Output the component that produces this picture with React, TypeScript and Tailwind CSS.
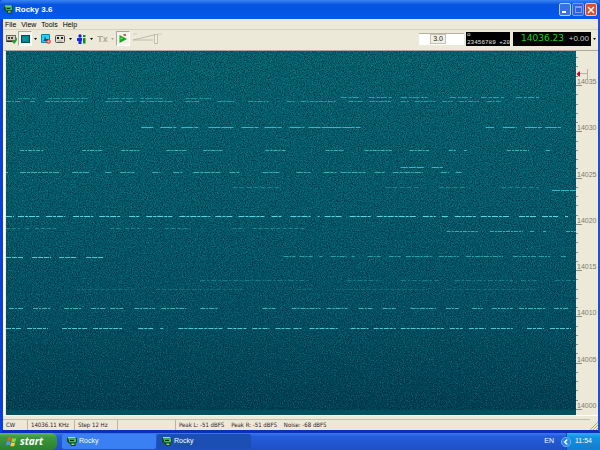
import type { ReactNode } from "react";

type Span = [number, number];

interface Trace {
	y: number;
	color: string;
	opacity: number;
	dash: string;
	spans: Span[];
}

const MENUS = ["File", "View", "Tools", "Help"];
const SCALE_LABELS = [14030, 14025, 14020, 14015, 14010, 14005, 14000];

const TRACES: Trace[] = [
	{
		y: 47,
		color: "#2fb4c4",
		opacity: 0.6,
		dash: "4 1 7 2",
		spans: [[12, 30], [42, 82], [101, 128], [134, 157], [179, 205]],
	},
	{
		y: 46,
		color: "#37b9cf",
		opacity: 0.75,
		dash: "6 2 3 1",
		spans: [[334, 354], [362, 386], [394, 421], [443, 465], [474, 498], [509, 532]],
	},
	{
		y: 50,
		color: "#3fc5c4",
		opacity: 0.65,
		dash: "5 1 2 1",
		spans: [
			[0, 15], [24, 30], [39, 77], [99, 116], [120, 130], [134, 166], [179, 194],
			[211, 229], [242, 262], [280, 288], [294, 329], [342, 356], [363, 384],
			[394, 403], [408, 428], [435, 446], [452, 472], [480, 494],
		],
	},
	{
		y: 76,
		color: "#35c5d0",
		opacity: 0.9,
		dash: "12 1 20 1",
		spans: [
			[135, 147], [154, 170], [175, 192], [202, 227], [235, 252], [258, 275],
			[283, 298], [302, 354], [479, 487], [496, 510], [518, 535], [538, 554],
		],
	},
	{
		y: 99,
		color: "#4fd6cc",
		opacity: 0.75,
		dash: "4 1 2 1",
		spans: [
			[14, 38], [76, 97], [115, 133], [160, 180], [197, 216], [259, 279],
			[319, 337], [358, 385], [403, 422], [442, 449], [457, 460], [500, 522],
			[539, 543],
		],
	},
	{
		y: 121,
		color: "#4fd6cc",
		opacity: 0.7,
		dash: "6 1 3 1",
		spans: [
			[0, 2], [14, 54], [66, 84], [99, 106], [114, 128], [146, 154], [167, 176],
			[187, 214], [223, 234], [256, 273], [290, 304], [317, 330], [334, 359],
			[368, 379], [386, 416], [434, 442], [449, 456],
		],
	},
	{
		y: 116,
		color: "#3cc8da",
		opacity: 0.85,
		dash: "7 1",
		spans: [[394, 418], [425, 436]],
	},
	{
		y: 136,
		color: "#34aaa9",
		opacity: 0.5,
		dash: "5 2",
		spans: [[226, 274], [379, 414], [432, 459], [494, 532]],
	},
	{ y: 139, color: "#3cc8da", opacity: 0.85, dash: "8 1", spans: [[545, 569]] },
	{
		y: 165,
		color: "#68e2ee",
		opacity: 0.9,
		dash: "6 1 3 1",
		spans: [
			[0, 8], [12, 34], [40, 59], [67, 87], [93, 114], [123, 134], [140, 166],
			[173, 204], [209, 226], [232, 258], [265, 276], [284, 304], [311, 313],
			[318, 336], [343, 364], [370, 410], [416, 429], [435, 442], [448, 469],
			[474, 502], [512, 529], [535, 551], [558, 561],
		],
	},
	{
		y: 177,
		color: "#38b0b0",
		opacity: 0.55,
		dash: "4 2",
		spans: [
			[0, 14], [19, 24], [29, 50], [104, 114], [119, 134], [142, 148],
			[159, 184], [226, 239], [246, 300],
		],
	},
	{
		y: 180,
		color: "#45cdd0",
		opacity: 0.75,
		dash: "4 1 2 1",
		spans: [[440, 472], [483, 516], [523, 527], [536, 539], [559, 569]],
	},
	{
		y: 206,
		color: "#5ce0dc",
		opacity: 0.85,
		dash: "5 1",
		spans: [[0, 18], [26, 45], [53, 71], [80, 98]],
	},
	{
		y: 205,
		color: "#45cdc4",
		opacity: 0.65,
		dash: "5 1 2 1",
		spans: [
			[277, 289], [293, 306], [313, 316], [324, 340], [345, 348], [361, 374],
			[382, 394], [399, 426], [432, 452], [459, 496], [506, 529], [532, 543],
			[554, 559],
		],
	},
	{
		y: 229,
		color: "#2fa5a5",
		opacity: 0.5,
		dash: "5 2 2 2",
		spans: [[194, 304], [340, 374], [394, 432], [448, 506], [514, 532], [548, 569]],
	},
	{
		y: 238,
		color: "#2fa5a5",
		opacity: 0.35,
		dash: "4 2",
		spans: [[70, 130], [150, 236], [290, 304], [330, 420], [440, 530]],
	},
	{
		y: 257,
		color: "#55d4d4",
		opacity: 0.75,
		dash: "5 1 2 1",
		spans: [
			[3, 18], [27, 45], [58, 76], [85, 99], [104, 117], [128, 149], [155, 180],
			[194, 212], [256, 269], [285, 314], [320, 341], [352, 367], [376, 389],
			[404, 429], [439, 452], [465, 476], [485, 506], [512, 538], [547, 561],
		],
	},
	{
		y: 277,
		color: "#62dce4",
		opacity: 0.85,
		dash: "5 1 3 1",
		spans: [
			[0, 15], [21, 42], [56, 82], [87, 117], [132, 148], [154, 157], [172, 216],
			[221, 240], [246, 263], [269, 284], [287, 295], [303, 331], [344, 362],
			[367, 389], [394, 437], [443, 456], [462, 479], [484, 506], [520, 537],
			[543, 564],
		],
	},
];

function RockyIcon({ className }: { className: string }) {
	return (
		<svg viewBox="0 0 10 9" className={className} aria-hidden="true">
			<path d="M1 0h7l2 1.500v4L8 6.500H2L0 4.500V1.500z" fill="#0c4a18" />
			<path d="M1 0h7l1 1.500H1z" fill="#8af0a0" />
			<path d="M1.500 2h7.500v3.200H2.500z" fill="#3cc95c" />
			<path d="M3 2.800h4v1.200H3z" fill="#0b2410" />
			<path d="M3 6h5.500v3H4z" fill="#123f1a" />
			<path d="M4.400 6.600h3v1.200H4.400z" fill="#c4f5c4" />
		</svg>
	);
}

function ToolButton({
	label,
	pressed,
	children,
}: {
	label: string;
	pressed?: boolean;
	children: ReactNode;
}) {
	return (
		<button
			type="button"
			aria-label={label}
			className={`flex h-[15px] w-[14px] items-center justify-center ${
				pressed
					? "border border-t-[#aca899] border-l-[#aca899] border-r-white border-b-white bg-[#f5f3ea]"
					: ""
			}`}
		>
			{children}
		</button>
	);
}

function DropArrow({ label, muted }: { label: string; muted?: boolean }) {
	return (
		<button
			type="button"
			aria-label={label}
			className="flex h-[15px] w-[7px] items-center justify-center"
		>
			<svg viewBox="0 0 3 2" className="h-[2px] w-[3px]">
				<path d="M0 0h3L1.5 2z" fill={muted ? "#aca899" : "#000"} />
			</svg>
		</button>
	);
}

function Toolbar() {
	return (
		<div className="flex h-[18px] items-center border-t border-[#d6d2c2] pl-[1px]">
			<ToolButton label="Radio settings">
				<svg viewBox="0 0 11 10" className="h-[10px] w-[11px]">
					<path d="M0 1h10v7H0z" fill="#6d6b60" />
					<path d="M1 2h8v4H1z" fill="#cfccbf" />
					<path d="M2 3h2v2H2zM5 3h2v2H5z" fill="#3b3a35" />
					<path d="M1 7h5v1H1z" fill="#222" />
					<path d="M6 6l2 2 3-5v3L8.500 10 6 8z" fill="#1ba82b" />
				</svg>
			</ToolButton>
			<ToolButton label="Waterfall" pressed>
				<svg viewBox="0 0 9 10" className="h-[10px] w-[9px]">
					<path d="M0 1h9v8H0z" fill="#004c56" />
					<path d="M1 2h7v6H1z" fill="#00868e" />
					<path d="M1 4h3M5 4h2M2 6h4" stroke="#25a8ac" strokeWidth="0.8" />
				</svg>
			</ToolButton>
			<DropArrow label="Waterfall options" />
			<ToolButton label="Zoom">
				<svg viewBox="0 0 10 10" className="h-[10px] w-[10px]">
					<rect x="0" y="0" width="9" height="9" rx="1" fill="#127fa8" />
					<path d="M1 1h7v7H1z" fill="#23d5f0" />
					<path d="M3 6l1-4 1 3h2v2H2z" fill="#064a86" />
					<circle cx="7.500" cy="7.500" r="1.800" fill="#f8b0b0" stroke="#d22" strokeWidth="1" />
				</svg>
			</ToolButton>
			<ToolButton label="Recorder">
				<svg viewBox="0 0 10 8" className="h-[8px] w-[10px]">
					<rect x="0.500" y="0.500" width="9" height="7" rx="1" fill="#dedbd0" stroke="#55534a" />
					<rect x="2" y="2" width="2" height="2" fill="#222" />
					<rect x="6" y="2" width="2" height="2" fill="#222" />
					<path d="M3 6h4" stroke="#a8a59a" />
				</svg>
			</ToolButton>
			<DropArrow label="Recorder options" />
			<ToolButton label="Operator">
				<svg viewBox="0 0 9 10" className="h-[10px] w-[9px]">
					<circle cx="3" cy="2" r="1.700" fill="#1420d0" />
					<path d="M0 4h5v3H4.500v3h-3V7H0z" fill="#1828e0" />
					<path d="M6 1h2.500v2H6zM6 4h2.500v5.500H6z" fill="#0b8c28" />
				</svg>
			</ToolButton>
			<DropArrow label="Operator options" />
			<button
				type="button"
				disabled
				className="ml-[1px] h-[15px] w-[13px] text-[9px] leading-[14px] font-bold text-[#aaa79a]"
			>
				Tx
			</button>
			<DropArrow label="Transmit options" muted />
			<ToolButton label="Start radio" pressed>
				<svg viewBox="0 0 8 9" className="h-[9px] w-[8px]">
					<path d="M0.500 1L8 5 0.500 9z" fill="#12a91e" />
					<path d="M1.500 3l3 1.800-3 1z" fill="#54e55b" />
					<path d="M4 0h3v2H5z" fill="#d65b52" />
				</svg>
			</ToolButton>
			<div className="relative ml-[2px] h-[13px] w-[31px]">
				<svg viewBox="0 0 31 13" className="h-full w-full">
					<path d="M1 8L22 3M1 8h20" stroke="#b5b1a2" strokeWidth="0.8" fill="none" />
					<path d="M1 2h4M26 2h4" stroke="#c9c5b6" strokeWidth="0.8" />
				</svg>
				<input
					type="range"
					disabled
					aria-label="Volume"
					defaultValue={80}
					className="absolute inset-0 h-full w-full appearance-none bg-transparent [&::-webkit-slider-thumb]:h-[10px] [&::-webkit-slider-thumb]:w-[4px] [&::-webkit-slider-thumb]:appearance-none [&::-webkit-slider-thumb]:border [&::-webkit-slider-thumb]:border-[#c2beaf] [&::-webkit-slider-thumb]:bg-[#f0eee2]"
				/>
			</div>

			<div className="ml-auto flex items-center">
				<div className="flex h-[12px] w-[45px] border-t border-[#b5b1a2] bg-white pl-[11px]">
					<button
						type="button"
						className="h-[10px] w-[16px] border border-[#c6c2b3] bg-[#f1efe4] text-[7px] leading-[8px] text-[#222]"
					>
						3.0
					</button>
				</div>
				<div className="ml-[2px] flex h-[14px] w-[44px] flex-col justify-between bg-black pl-[1px] font-['Liberation_Mono',monospace] text-[6px] leading-[6px] text-[#e4e4e4]">
					<span>o</span>
					<span className="flex justify-between">
						<span>23456789</span>
						<span>+20</span>
					</span>
				</div>
				<div className="ml-[3px] flex h-[14px] w-[78px] items-center justify-between bg-black pr-[2px] pl-[8px]">
					<span className="font-['DejaVu_Sans',sans-serif] text-[9px] leading-[13px] text-[#12d812]">
						14036.23
					</span>
					<span className="text-[8px] leading-[13px] text-[#d4d4d4]">+0.00</span>
				</div>
				<DropArrow label="Frequency options" />
			</div>
		</div>
	);
}

function Waterfall() {
	return (
		<svg
			viewBox="0 0 569 364"
			preserveAspectRatio="none"
			className="h-full min-w-0 flex-1"
			role="img"
			aria-label="Waterfall"
		>
			<defs>
				<linearGradient id="sea" x1="0" y1="0" x2="0" y2="1">
					<stop offset="0" stopColor="#056873" />
					<stop offset="0.4" stopColor="#04606e" />
					<stop offset="0.75" stopColor="#025365" />
					<stop offset="1" stopColor="#003f52" />
				</linearGradient>
				<filter id="light" x="0" y="0" width="1" height="1" colorInterpolationFilters="sRGB">
					<feTurbulence type="fractalNoise" baseFrequency="0.83" numOctaves="2" seed="4" />
					<feColorMatrix values="0 0 0 0 0.12  0 0 0 0 0.62  0 0 0 0 0.64  2.4 0 0 0 -1.1" />
				</filter>
				<filter id="dark" x="0" y="0" width="1" height="1" colorInterpolationFilters="sRGB">
					<feTurbulence type="fractalNoise" baseFrequency="0.87" numOctaves="2" seed="9" />
					<feColorMatrix values="0 0 0 0 0  0 0 0 0 0.13  0 0 0 0 0.22  3 0 0 0 -1.2" />
				</filter>
			</defs>
			<rect width="569" height="364" fill="url(#sea)" />
			<rect width="569" height="359" filter="url(#light)" opacity="0.5" />
			<rect width="569" height="359" filter="url(#dark)" opacity="0.6" />
			<rect y="359" width="569" height="5" fill="#00505e" />
			{TRACES.map((trace) => (
				<g
					key={trace.y}
					stroke={trace.color}
					strokeOpacity={trace.opacity}
					strokeDasharray={trace.dash}
				>
					{trace.spans.map(([from, to]) => (
						<path key={from} d={`M${from} ${trace.y + 0.5}H${to}`} />
					))}
				</g>
			))}
		</svg>
	);
}

function MinorTick() {
	return (
		<div className="flex flex-1 flex-col justify-end">
			<div className="h-px w-[2px] bg-[#8f8c80]" />
		</div>
	);
}

function MajorTick({ label }: { label: number }) {
	return (
		<div className="flex flex-1 flex-col justify-end">
			<span className="pl-[1px] text-[7px] leading-[7px] text-[#7c7a71]">{label}</span>
			<div className="h-px w-[6px] bg-[#8f8c80]" />
		</div>
	);
}

function FrequencyScale() {
	return (
		<div className="relative flex w-[22px] shrink-0 flex-col pb-[5px]">
			<div className="flex h-[35px] flex-col">
				<div className="flex h-[7px] flex-col">
					<MinorTick />
				</div>
				<MinorTick />
				<MinorTick />
				<MajorTick label={14035} />
			</div>
			{SCALE_LABELS.map((label) => (
				<div key={label} className="flex flex-1 flex-col">
					<MinorTick />
					<MinorTick />
					<MinorTick />
					<MinorTick />
					<MajorTick label={label} />
				</div>
			))}
			<svg viewBox="0 0 12 12" className="absolute top-[17px] left-0 h-[12px] w-[12px]">
				<path d="M0.500 6l2.500-2.500h1v5H3z" fill="#c00c34" />
				<path d="M4 5.500h7M11.500 1v10" stroke="#b5b2a6" />
			</svg>
		</div>
	);
}

function StatusPanel({ className, children }: { className: string; children?: ReactNode }) {
	return (
		<div
			className={`border-t border-r border-t-[#c3bfae] border-r-[#b9b5a5] pl-[3px] whitespace-pre ${className}`}
		>
			{children}
		</div>
	);
}

function TaskButton({ active }: { active?: boolean }) {
	return (
		<button
			type="button"
			className={`flex h-[15px] w-[94px] items-center gap-[2px] rounded-[2px] pl-[5px] text-[7px] text-white ${
				active ? "bg-[#1c4fb4]" : "bg-[#3b80f2]"
			}`}
		>
			<RockyIcon className="h-[9px] w-[10px]" />
			Rocky
		</button>
	);
}

function Taskbar() {
	return (
		<div className="flex h-[17px] shrink-0 items-stretch bg-linear-to-b from-[#3a78ea] via-[#245ddb] via-20% to-[#1f4fc4] text-white">
			<button
				type="button"
				className="flex w-[57px] items-center gap-[3px] rounded-r-[6px] bg-linear-to-b from-[#5eb45e] via-[#3b983b] via-25% to-[#2c7f2f] pl-[6px] font-['Open_Sans',sans-serif] text-[10px] leading-[15px] font-bold italic"
			>
				<svg viewBox="0 0 11 11" className="h-[11px] w-[11px]">
					<path d="M2 1.500q2-1 3.500 0L4.600 5Q3 4 1 5z" fill="#f25a24" />
					<path d="M6.300 2q2 1 4 0L9.400 5.500q-2 1-4 0z" fill="#8fd63a" />
					<path d="M0.900 5.800q2-1 3.500 0L3.500 9.300Q2 8.300 0 9.300z" fill="#4a9bf5" />
					<path d="M5.200 6.300q2 1 4 0L8.300 9.800q-2 1-4 0z" fill="#fccb2e" />
				</svg>
				start
			</button>
			<div className="flex items-center gap-[1px] pl-[5px]">
				<TaskButton />
				<TaskButton active />
			</div>
			<span className="ml-auto self-center pr-[12px] text-[7px]">EN</span>
			<div className="flex w-[34px] items-center gap-[4px] border-l border-[#0c4fae] bg-linear-to-b from-[#28b0f4] via-[#1492e4] via-25% to-[#117dd0]">
				<button type="button" aria-label="Show hidden icons" className="-ml-[6px]">
					<svg viewBox="0 0 10 10" className="h-[10px] w-[10px]">
						<circle cx="5" cy="5" r="4.600" fill="#2a86e6" stroke="#7cc4f8" strokeWidth="0.800" />
						<path d="M6.300 2.500L3.700 5l2.600 2.500" fill="none" stroke="#fff" strokeWidth="1.400" />
					</svg>
				</button>
				<span className="text-[7px]">11:54</span>
			</div>
		</div>
	);
}

export default function App() {
	return (
		<div className="flex h-screen flex-col overflow-hidden font-['Liberation_Sans',Arial,sans-serif]">
			<div className="flex min-h-0 flex-1 flex-col border-r-2 border-b-[3px] border-l-[3px] border-r-[#1a4fdc] border-b-[#0a2fb8] border-l-[#0a3fdc] bg-[#ece9d8]">
				<header className="-mr-[2px] -ml-[3px] flex h-[19px] shrink-0 items-center rounded-t-[3px] bg-linear-to-b from-[#3b84f0] via-[#0453e0] via-25% to-[#0757ea] pr-[3px] pl-[4px]">
					<RockyIcon className="h-[9px] w-[9px]" />
					<h1 className="flex-1 pl-[2px] text-[8px] font-bold text-white">Rocky 3.6</h1>
					<div className="flex gap-[1px]">
						<button
							type="button"
							aria-label="Minimize"
							className="flex h-[13px] w-[12px] items-end rounded-[2px] border border-[#b9cdf5] bg-[#3a6fe6] p-[2px]"
						>
							<span className="h-[2px] w-[4px] bg-white" />
						</button>
						<button
							type="button"
							aria-label="Maximize"
							className="flex h-[13px] w-[12px] items-center justify-center rounded-[2px] border border-[#7f9fec] bg-[#2f63de]"
						>
							<span className="h-[7px] w-[7px] border border-t-2 border-[#7f9fec]" />
						</button>
						<button
							type="button"
							aria-label="Close"
							className="flex h-[13px] w-[12px] items-center justify-center rounded-[2px] border border-[#f0c9c0] bg-[#dc4f2c]"
						>
							<svg viewBox="0 0 8 8" className="h-[8px] w-[8px]">
								<path d="M1 1l6 6M7 1L1 7" stroke="#fff" strokeWidth="1.500" />
							</svg>
						</button>
					</div>
				</header>
				<nav className="flex h-[10px] shrink-0 items-center gap-[5px] pl-[2px] text-[7px] text-black">
					{MENUS.map((menu) => (
						<button key={menu} type="button" className="leading-[9px]">
							{menu}
						</button>
					))}
				</nav>
				<Toolbar />
				<main className="mt-[3px] flex min-h-0 flex-1 border-t border-b border-l-2 border-t-[#aca899] border-b-white border-l-white pl-[1px]">
					<Waterfall />
					<FrequencyScale />
				</main>
				<footer className="mt-[3px] flex h-[11px] shrink-0 font-['DejaVu_Sans_Condensed','DejaVu_Sans',sans-serif] text-[6px] leading-[10px] text-[#222]">
					<StatusPanel className="w-[25px]">CW</StatusPanel>
					<StatusPanel className="w-[47px]">14036.11 KHz</StatusPanel>
					<StatusPanel className="w-[43px]">Step 12 Hz</StatusPanel>
					<StatusPanel className="w-[58px]" />
					<StatusPanel className="flex flex-1 gap-[7px] border-r-0">
						<span>Peak L: -51 dBFS</span>
						<span>Peak R: -51 dBFS</span>
						<span>Noise: -68 dBFS</span>
					</StatusPanel>
					<svg viewBox="0 0 8 8" className="h-[8px] w-[8px] self-end">
						<path d="M0 8l8-8M3 8l5-5M6 8l2-2" stroke="#aca899" />
					</svg>
				</footer>
			</div>
			<Taskbar />
		</div>
	);
}
